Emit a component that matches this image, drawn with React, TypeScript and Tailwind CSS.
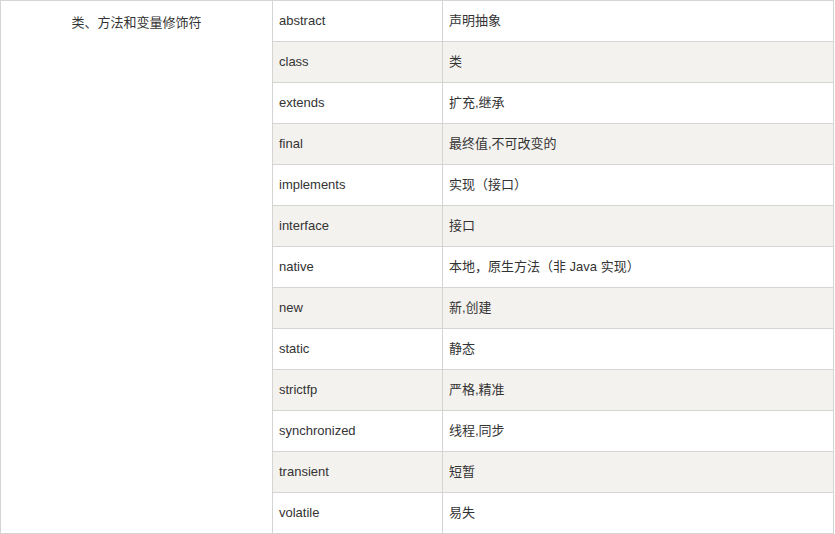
const rows: [string, string][] = [
  ['abstract', '声明抽象'],
  ['class', '类'],
  ['extends', '扩充,继承'],
  ['final', '最终值,不可改变的'],
  ['implements', '实现（接口）'],
  ['interface', '接口'],
  ['native', '本地，原生方法（非 Java 实现）'],
  ['new', '新,创建'],
  ['static', '静态'],
  ['strictfp', '严格,精准'],
  ['synchronized', '线程,同步'],
  ['transient', '短暂'],
  ['volatile', '易失'],
];

export default function App() {
  return (
    <div className="w-[835px] h-[534px] bg-white text-[13px] text-[#333] font-['Liberation_Sans','Noto_Sans_CJK_SC',sans-serif]">
      <table className="border-collapse w-[834px] table-fixed">
        <colgroup>
          <col className="w-[272px]" />
          <col className="w-[170px]" />
          <col />
        </colgroup>
        <tbody>
          {rows.map(([kw, desc], i) => (
            <tr key={kw} className={i % 2 === 1 ? 'bg-[#f3f2ef]' : 'bg-white'}>
              {i === 0 && (
                <td
                  rowSpan={rows.length}
                  className="bg-white border border-[#d4d4d4] align-top text-center pt-[12px]"
                >
                  类、方法和变量修饰符
                </td>
              )}
              <td className="h-[41px] border border-[#d4d4d4] px-[6px] py-0 align-middle">{kw}</td>
              <td className="h-[41px] border border-[#d4d4d4] px-[6px] py-0 align-middle">{desc}</td>
            </tr>
          ))}
        </tbody>
      </table>
    </div>
  );
}
